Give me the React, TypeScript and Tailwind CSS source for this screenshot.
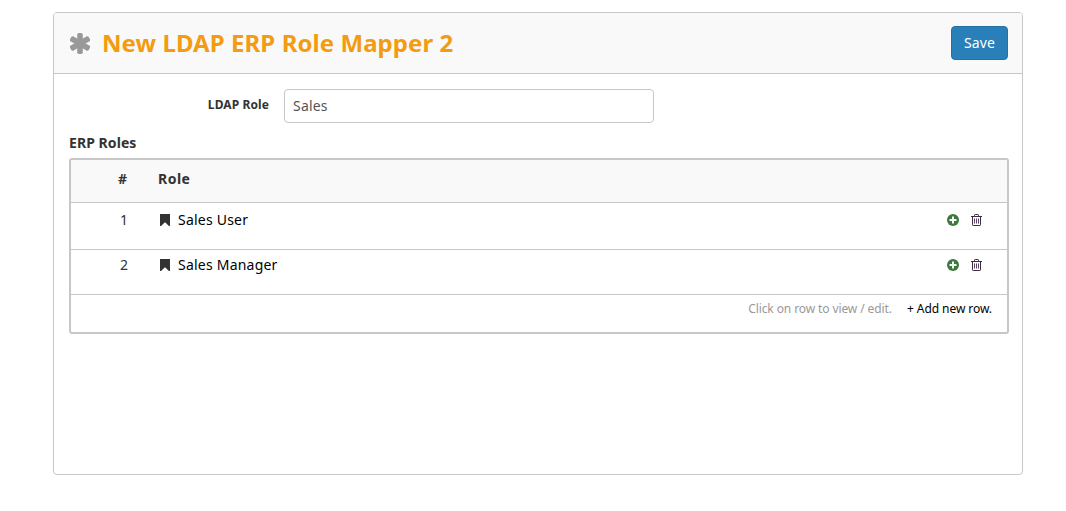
function AsteriskIcon() {
  return (
    <svg width="20" height="21" viewBox="0 0 20 21" fill="#999999" className="shrink-0">
      <rect x="7.200" y="0" width="5.600" height="21" rx="1.800" />
      <rect x="7.200" y="-0.300" width="5.600" height="21.600" rx="1.800" transform="rotate(60 10 10.5)" />
      <rect x="7.200" y="-0.300" width="5.600" height="21.600" rx="1.800" transform="rotate(-60 10 10.5)" />
    </svg>
  );
}

function BookmarkIcon() {
  return (
    <svg width="10" height="12" viewBox="0 0 10 12" fill="#333333" className="shrink-0">
      <path d="M0 0h10v12H9L5 8.200 1 12H0z" />
    </svg>
  );
}

function PlusIcon() {
  return (
    <svg width="12" height="12" viewBox="0 0 12 12" className="shrink-0">
      <circle cx="6" cy="6" r="6" fill="#3b7a3b" />
      <path d="M5 2.500h2V5h2.500v2H7v2.500H5V7H2.500V5H5z" fill="#ffffff" />
    </svg>
  );
}

function TrashIcon() {
  return (
    <svg width="11" height="12" viewBox="0 0 11 12" fill="none" stroke="#36303f" className="shrink-0">
      <path d="M0 2.500h11M3.500 2V1.200q0-.7.700-.7h2.600q.7 0 .7.700V2M1.500 3v7.800q0 .7.700.7h6.600q.7 0 .7-.7V3" />
      <path stroke="#5d4166" d="M3.500 4.500v5M5.500 4.500v5M7.500 4.500v5" />
    </svg>
  );
}

function Row({ index, name, className }: { index: number; name: string; className: string }) {
  return (
    <div className={`flex items-start border-b border-[#c7c7c7] ${className}`}>
      <div className="w-[57px] text-right leading-5">{index}</div>
      <div className="ml-8 flex flex-1 items-center gap-2 leading-5 text-black">
        <BookmarkIcon />
        <span className="tracking-[0.22px]">{name}</span>
      </div>
      <div className="mr-[25px] flex h-5 items-center gap-3">
        <PlusIcon />
        <TrashIcon />
      </div>
    </div>
  );
}

export default function App() {
  return (
    <div className="h-[511px] w-[1066px] bg-white pt-3 pl-[53px] font-['Noto_Sans',sans-serif] text-sm text-[#333333]">
      <div className="h-[463px] w-[970px] overflow-hidden rounded border border-[#c7c7c7]">
        <header className="flex h-[61px] items-center border-b border-[#c7c7c7] bg-[#f9f9f9] pr-[14px] pl-4">
          <AsteriskIcon />
          <h1 className="ml-3 flex-1 text-2xl font-bold tracking-[0.07px] whitespace-nowrap text-[#f39c12]">New LDAP ERP Role Mapper 2</h1>
          <button className="h-[34px] w-[57px] rounded border border-[#2472a4] bg-[#2980b9] tracking-[0.15px] text-white">Save</button>
        </header>
        <main className="pt-[15px] pr-[13px] pl-[15px]">
          <div className="flex">
            <label htmlFor="role" className="w-[200px] pt-2 text-right text-xs font-bold tracking-[0.1px]">LDAP Role</label>
            <input id="role" defaultValue="Sales" className="ml-[15px] h-[34px] w-[370px] rounded border border-[#c7c7c7] px-2 pb-[2px] tracking-[0.2px] text-[#555555]" />
          </div>
          <h2 className="mt-[10px] h-[25px] leading-5 font-bold tracking-[0.06px]">ERP Roles</h2>
          <div className="h-[176px] overflow-hidden rounded-[3px] border-2 border-[#c7c7c7]">
            <div className="flex h-[43px] border-b border-[#c7c7c7] bg-[#f9f9f9] pt-[9px] leading-5 font-bold">
              <div className="w-[56px] text-right">#</div>
              <div className="ml-[31px] tracking-[0.5px]">Role</div>
            </div>
            <Row index={1} name="Sales User" className="h-[47px] pt-[7px]" />
            <Row index={2} name="Sales Manager" className="h-[45px] pt-[5px]" />
            <div className="flex justify-end gap-[15px] pt-[5px] pr-[15px] text-xs leading-[18px]">
              <span className="tracking-[-0.1px] text-[#999999]">Click on row to view / edit.</span>
              <span className="tracking-[-0.06px] text-black">+ Add new row.</span>
            </div>
          </div>
        </main>
      </div>
    </div>
  );
}
